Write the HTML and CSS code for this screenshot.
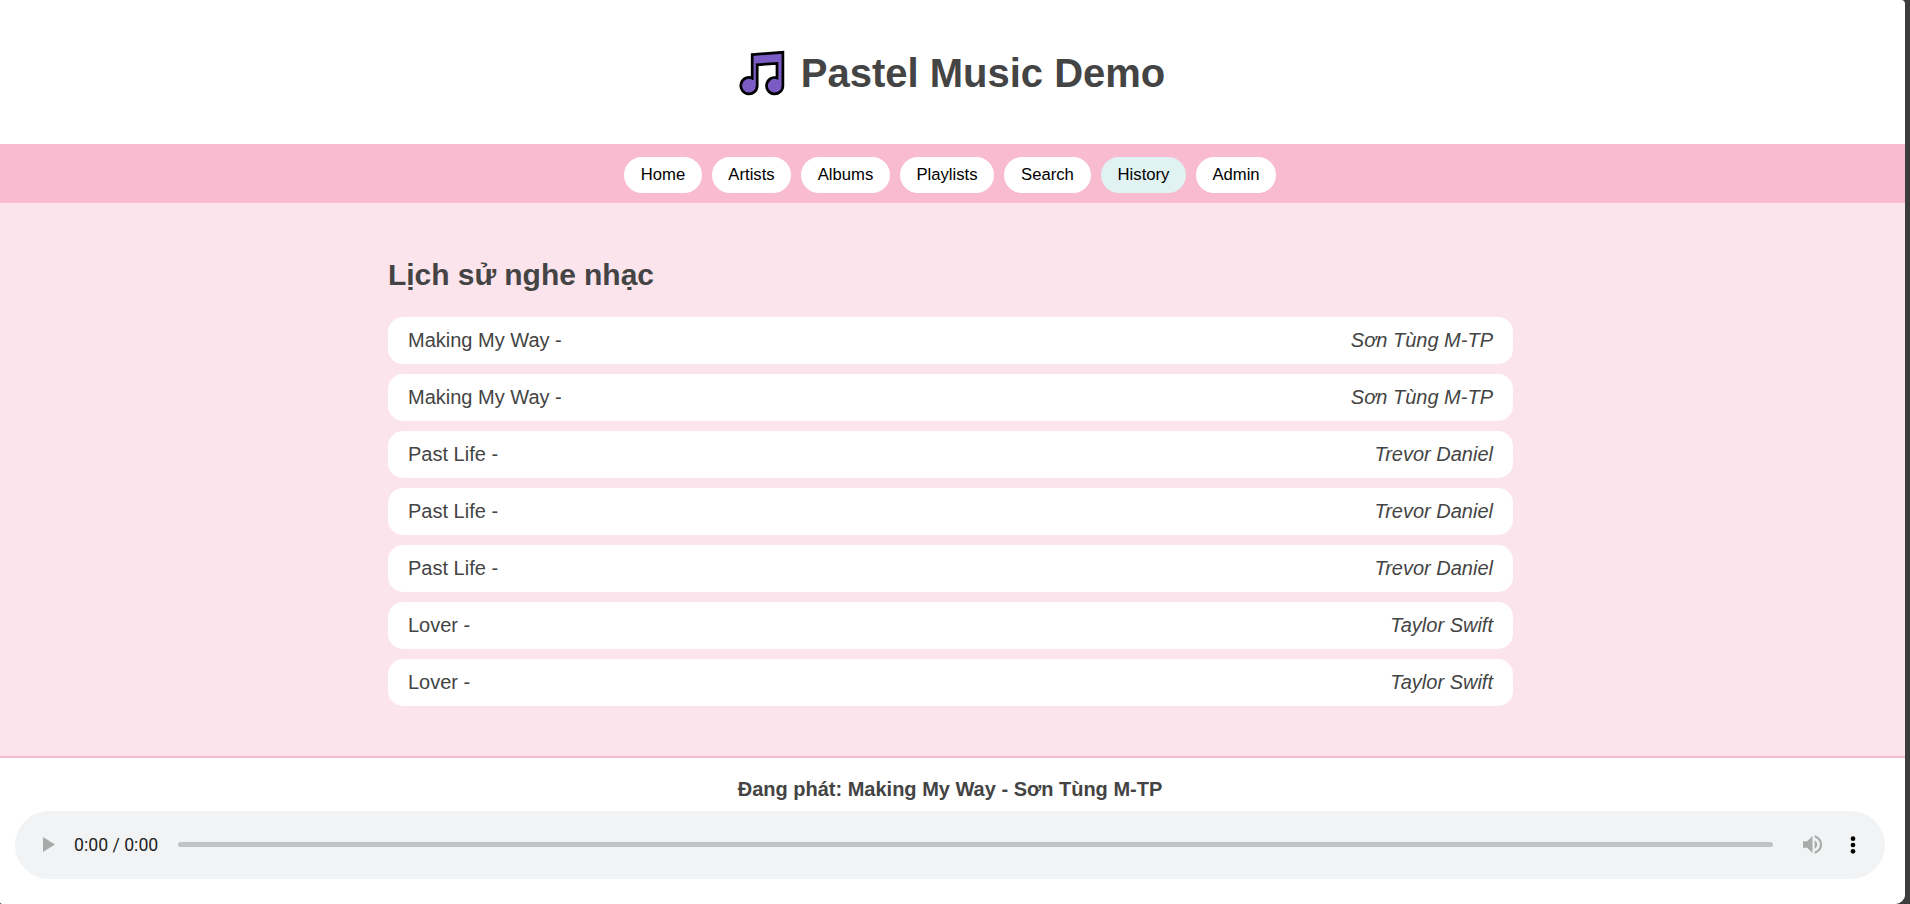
FILE: index.html
```html
<!DOCTYPE html>
<html lang="vi">
<head>
<meta charset="utf-8">
<title>Pastel Music Demo</title>
<link rel="stylesheet" href="styles.css">
</head>
<body>
<div class="page">
  <header class="header">
    <svg class="logo" viewBox="0 0 46 46" aria-hidden="true">
      <path d="M12.200 4.600L42.900 2.300V35.700A8.200 8.200 0 1 1 37 27.850V13.400L17.200 14.800V35.700A8.200 8.200 0 1 1 12.200 28.150Z" fill="#7a5cc4" stroke="#000" stroke-width="2.700"/>
    </svg>
    <h1 class="title">Pastel Music Demo</h1>
  </header>
  <nav class="nav">
    <button class="tab tab-home">Home</button>
    <button class="tab tab-artists">Artists</button>
    <button class="tab tab-albums">Albums</button>
    <button class="tab tab-playlists">Playlists</button>
    <button class="tab tab-search">Search</button>
    <button class="tab tab-history active">History</button>
    <button class="tab tab-admin">Admin</button>
  </nav>
  <main class="main">
    <section class="history">
      <h2 class="heading">Lịch sử nghe nhạc</h2>
      <ul class="list">
        <li class="item"><span>Making My Way -</span><em>Sơn Tùng M-TP</em></li>
        <li class="item"><span>Making My Way -</span><em>Sơn Tùng M-TP</em></li>
        <li class="item"><span>Past Life -</span><em>Trevor Daniel</em></li>
        <li class="item"><span>Past Life -</span><em>Trevor Daniel</em></li>
        <li class="item"><span>Past Life -</span><em>Trevor Daniel</em></li>
        <li class="item"><span>Lover -</span><em>Taylor Swift</em></li>
        <li class="item"><span>Lover -</span><em>Taylor Swift</em></li>
      </ul>
    </section>
  </main>
  <footer class="footer">
    <div class="now">Đang phát: Making My Way - Sơn Tùng M-TP</div>
    <div class="player">
      <svg class="play" viewBox="0 0 12 15"><path d="M0 0L12 7.5L0 15Z" fill="#a9aaaa"/></svg>
      <span class="time">0:00 / 0:00</span>
      <span class="track"></span>
      <svg class="volume" viewBox="3 3 18 18" fill="#a9aaaa"><path d="M3 9v6h4l5 5V4L7 9H3zM16.500 12c0-1.770-1.020-3.290-2.500-4.030v8.050c1.480-.730 2.500-2.250 2.500-4.020zM14 3.230v2.060c2.890.860 5 3.540 5 6.710s-2.110 5.850-5 6.710v2.060c4.010-.910 7-4.490 7-8.770s-2.990-7.860-7-8.770z"/></svg>
      <svg class="more" viewBox="0 0 6 18"><circle cx="3" cy="2.700" r="2.350"/><circle cx="3" cy="9" r="2.350"/><circle cx="3" cy="15.300" r="2.350"/></svg>
    </div>
  </footer>
</div>
</body>
</html>
```

FILE: styles.css
```css
* { box-sizing: border-box; }
body {
  margin: 0;
  background: #3c3c3c;
  color: #444;
  font: 20px/23px "Liberation Sans", Arial, sans-serif;
  overflow: hidden;
}
.page {
  display: flex;
  flex-direction: column;
  width: 1905px;
  height: 904px;
  background: #fff;
  border-radius: 0 4px 10px 3px;
  overflow: hidden;
}
.header {
  display: flex;
  justify-content: center;
  height: 144px;
  padding: 50px 0 0 0;
  width: 1905px;
}
.logo { width: 46px; height: 46px; margin-right: 15px; flex: none; overflow: visible; }
.title { margin: 0; font-size: 40px; line-height: 46px; white-space: nowrap; }
.nav {
  display: flex;
  justify-content: center;
  gap: 10px;
  height: 59px;
  padding: 13px 5px 10px 0;
  background: #f8bbd0;
}
.tab {
  height: 36px;
  padding: 0 0 2px;
  border: 0;
  border-radius: 18px;
  background: #fff;
  color: #000;
  font: 16.667px/19px "Liberation Sans", Arial, sans-serif;
}
.tab.active { background: #e0f2f1; }
.tab-home { width: 78px; }
.tab-artists { width: 79px; }
.tab-albums { width: 89px; }
.tab-playlists { width: 94px; }
.tab-search { width: 87px; }
.tab-history { width: 85px; }
.tab-admin { width: 80px; }
.main {
  height: 553px;
  padding: 55px 0 0 388px;
  background: #fce4ec;
}
.history { width: 1125px; }
.heading { margin: 0 0 25px; font-size: 30px; line-height: 34px; letter-spacing: -0.05px; }
.list {
  display: flex;
  flex-direction: column;
  gap: 10px;
  margin: 0;
  padding: 0;
  list-style: none;
}
.item {
  display: flex;
  justify-content: space-between;
  height: 47px;
  padding: 12px 20px;
  border-radius: 15px;
  background: #fff;
}
.footer {
  flex: 1;
  padding: 20px 20px 0 15px;
  border-top: 2px solid #f8bbd0;
  background: #fff;
}
.now { font-weight: bold; text-align: center; margin-bottom: 10px; }
.player {
  display: flex;
  align-items: center;
  height: 68px;
  padding: 0 29px 1px 28px;
  border-radius: 34px;
  background: #f1f3f4;
}
.play { width: 12px; height: 15px; }
.time {
  width: 104px;
  margin-left: 19px;
  color: #222;
  font: 17.7px/20px Roboto, sans-serif;
  white-space: nowrap;
}
.track { flex: 1; height: 5px; border-radius: 3px; background: #c1c2c3; }
.volume { width: 19px; height: 19px; margin-left: 30px; }
.more { width: 6px; height: 18px; margin-left: 28px; }
```
